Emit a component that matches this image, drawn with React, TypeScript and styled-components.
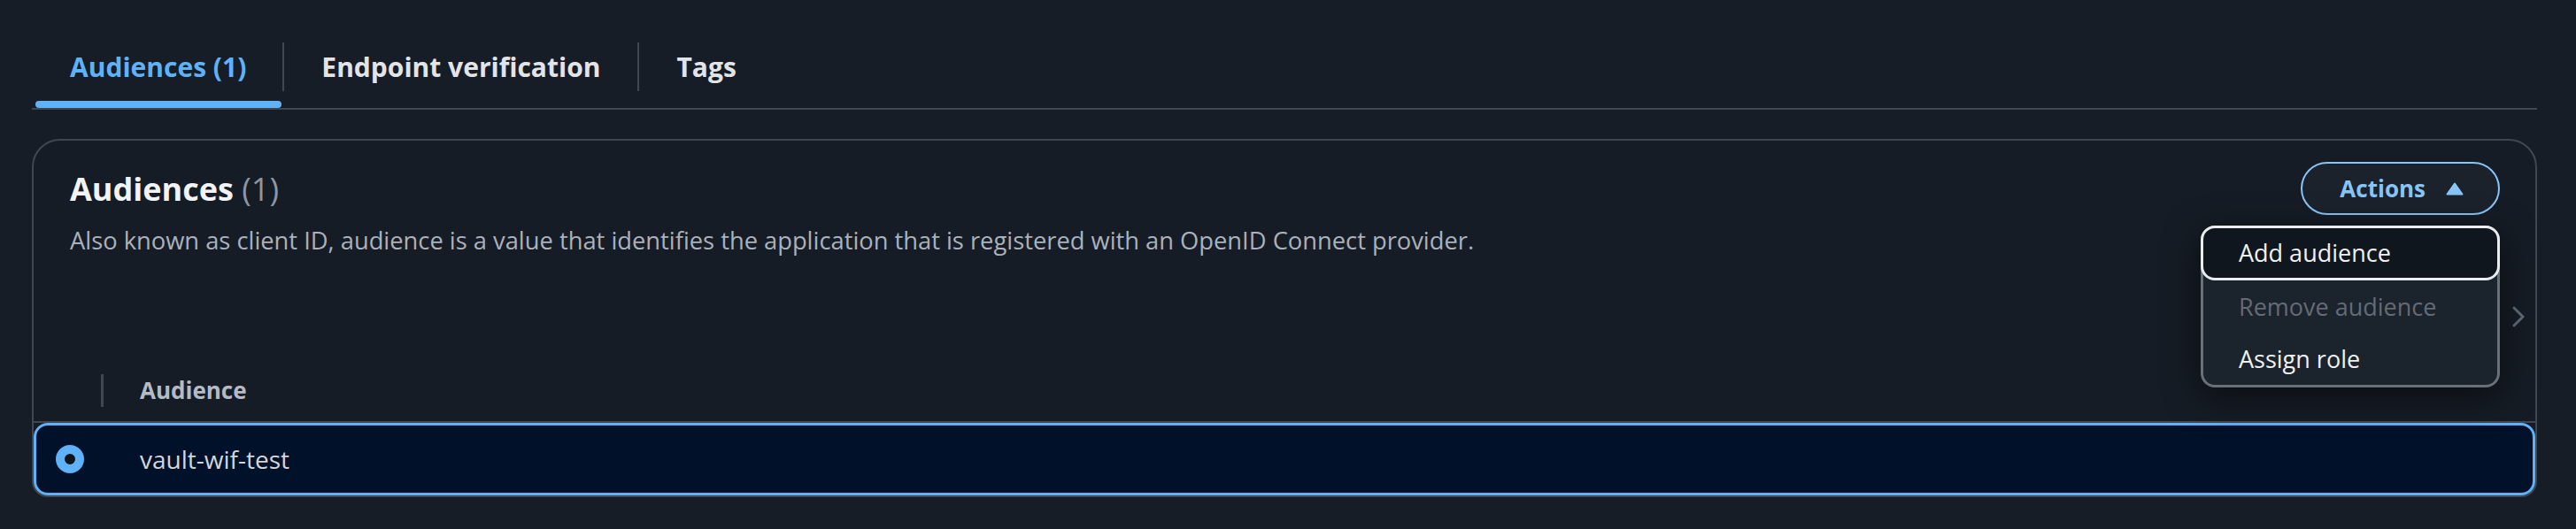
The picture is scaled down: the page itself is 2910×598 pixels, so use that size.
import { createGlobalStyle, styled } from 'styled-components';

const GlobalStyle = createGlobalStyle`
  html, body {
    margin: 0;
    padding: 0;
    background: #161d26;
  }
  body {
    font-family: "Open Sans", "Noto Sans", sans-serif;
    color: #e9ebed;
  }
  * {
    box-sizing: border-box;
  }
`;

const tabs = [
  { label: 'Audiences (1)', active: true },
  { label: 'Endpoint verification', active: false },
  { label: 'Tags', active: false }
];

const menuItems = [
  { label: 'Add audience', focused: true, disabled: false },
  { label: 'Remove audience', focused: false, disabled: true },
  { label: 'Assign role', focused: false, disabled: false }
];

const App = () => {
  return (
    <>
      <GlobalStyle />
      <Page>
        <TabList>
          {tabs.map((tab, index) => (
            <Tab key={tab.label}>
              <TabLabel $active={tab.active} $divided={index > 0}>
                {tab.label}
              </TabLabel>
              <Indicator $active={tab.active} />
            </Tab>
          ))}
        </TabList>

        <Card>
          <Header>
            <HeaderRow>
              <Title>
                Audiences <Count>(1)</Count>
              </Title>
              <ActionsWrap>
                <ActionsButton>
                  Actions
                  <svg width="20" height="15" viewBox="0 0 20 15">
                    <path d="M10 1.5 L18.5 13.5 H1.5 Z" fill="#89c4f6" stroke="#89c4f6" strokeWidth="2" strokeLinejoin="round" />
                  </svg>
                </ActionsButton>
                <Menu>
                  {menuItems.map((item) => (
                    <MenuItem key={item.label} $focused={item.focused} $disabled={item.disabled}>
                      {item.label}
                    </MenuItem>
                  ))}
                </Menu>
              </ActionsWrap>
            </HeaderRow>
            <Description>
              Also known as client ID, audience is a value that identifies the application that is registered with an
              OpenID Connect provider.
            </Description>
          </Header>

          <Tools>
            <svg width="16" height="24" viewBox="0 0 16 24">
              <polyline points="3,2 13,12 3,22" fill="none" stroke="#5f6b7a" strokeWidth="3" strokeLinecap="round" strokeLinejoin="round" />
            </svg>
          </Tools>

          <TableHead>
            <SelectCell />
            <ColumnDivider />
            <HeadText>Audience</HeadText>
          </TableHead>

          <Row>
            <RadioCell>
              <Radio />
            </RadioCell>
            <CellText>vault-wif-test</CellText>
          </Row>
        </Card>
      </Page>
    </>
  );
};

export default App;

const Page = styled.div`
  padding: 0 44px 0 36px;
`;

const TabList = styled.div`
  display: flex;
  padding-left: 2px;
  border-bottom: 2px solid #414750;
`;

const Tab = styled.div`
  display: flex;
  flex-direction: column;
  padding-top: 48px;
`;

const TabLabel = styled.div<{ $active: boolean; $divided: boolean }>`
  height: 55px;
  line-height: 55px;
  padding: 0 ${(p) => (p.$divided ? '42px' : '41px')};
  border-left: ${(p) => (p.$divided ? '2px solid #414750' : 'none')};
  font-size: 30px;
  font-weight: 700;
  white-space: nowrap;
  color: ${(p) => (p.$active ? '#5fb1f8' : '#e2e4e8')};
`;

const Indicator = styled.div<{ $active: boolean }>`
  height: 8px;
  margin: 11px 1px 0 2px;
  border-radius: 4px;
  background: ${(p) => (p.$active ? '#5fb1f8' : 'transparent')};
`;

const Card = styled.div`
  margin-top: 33px;
  border: 2px solid #414750;
  border-radius: 32px 32px 18px 18px;
  background: #161c25;
`;

const Header = styled.div`
  padding: 24px 40px 0 41px;
`;

const HeaderRow = styled.div`
  display: flex;
  align-items: center;
  justify-content: space-between;
  height: 60px;
`;

const Title = styled.h2`
  margin: 2px 0 0;
  font-size: 36px;
  line-height: 44px;
  font-weight: 700;
  color: #f2f3f5;
`;

const Count = styled.span`
  font-weight: 400;
  color: #8d96a3;
`;

const ActionsWrap = styled.div`
  position: relative;
`;

const ActionsButton = styled.button`
  display: flex;
  align-items: center;
  gap: 23px;
  height: 60px;
  padding: 0 39px 0 42px;
  border: 2px solid #89c4f6;
  border-radius: 30px;
  background: #1b222c;
  font-family: inherit;
  font-size: 26px;
  font-weight: 700;
  color: #89c4f6;
`;

const Menu = styled.div`
  position: absolute;
  top: calc(100% + 12px);
  right: 0;
  z-index: 2;
  width: 338px;
  border: 3px solid #6a707a;
  border-radius: 16px;
  background: #1b232d;
  box-shadow: 0 10px 40px rgba(0, 0, 0, 0.55);
`;

const MenuItem = styled.div<{ $focused: boolean; $disabled: boolean }>`
  height: ${(p) => (p.$focused ? '62px' : '59px')};
  line-height: ${(p) => (p.$focused ? '56px' : '59px')};
  margin: ${(p) => (p.$focused ? '-3px -3px 0' : '0')};
  padding-left: 40px;
  border: ${(p) => (p.$focused ? '3px solid #e9ebee' : 'none')};
  border-radius: 16px;
  background: ${(p) => (p.$focused ? '#10161e' : 'transparent')};
  font-size: 27px;
  white-space: nowrap;
  color: ${(p) => (p.$disabled ? '#646b75' : '#eef0f2')};
`;

const Description = styled.p`
  margin: 9px 0 0;
  font-size: 27.3px;
  line-height: 40px;
  color: #aab1bc;
`;

const Tools = styled.div`
  display: flex;
  align-items: center;
  justify-content: flex-end;
  height: 40px;
  margin-top: 46px;
  padding-right: 11px;
`;

const TableHead = styled.div`
  display: flex;
  align-items: center;
  height: 72px;
  margin-top: 28px;
  border-bottom: 2px solid #414750;
`;

const SelectCell = styled.div`
  width: 76px;
`;

const ColumnDivider = styled.div`
  width: 3px;
  height: 37px;
  background: #414750;
`;

const HeadText = styled.div`
  padding-left: 41px;
  font-size: 26px;
  line-height: 36px;
  font-weight: 700;
  color: #b5bbc5;
`;

const Row = styled.div`
  display: flex;
  align-items: center;
  height: 82px;
  border: 3px solid #5fb1f8;
  border-radius: 16px;
  background: #001129;
`;

const RadioCell = styled.div`
  display: flex;
  justify-content: center;
  width: 76px;
`;

const Radio = styled.span`
  width: 32px;
  height: 32px;
  border: 10px solid #5fb1f8;
  border-radius: 50%;
  background: #0f141a;
`;

const CellText = styled.div`
  padding-left: 41px;
  font-size: 28px;
  line-height: 40px;
  color: #d2d6dc;
`;
